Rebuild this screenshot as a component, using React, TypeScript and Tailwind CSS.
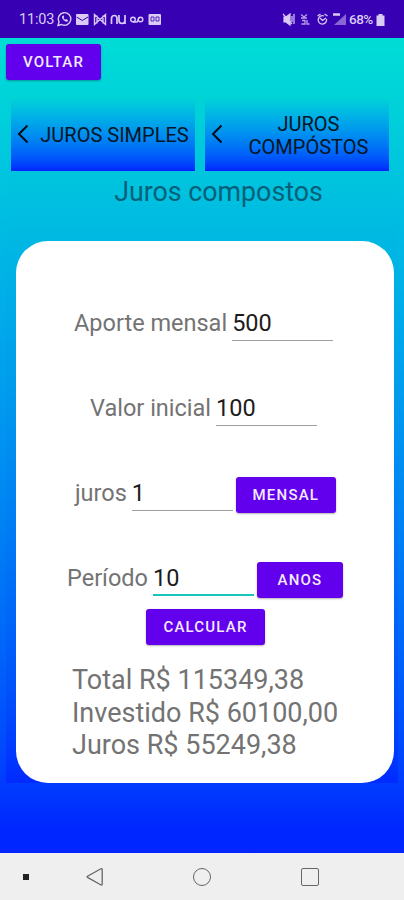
import type { ReactNode } from "react";

const BUTTON =
  "flex items-center justify-center rounded-[3px] bg-[#6200ee] text-[15px] font-medium tracking-[1.2px] text-[#f3eaff] shadow-[0_1px_2px_rgba(0,0,0,0.3)]";

const RESULTS = ["Total R$ 115349,38", "Investido R$ 60100,00", "Juros R$ 55249,38"];

function StatusBar() {
  return (
    <header className="flex h-[38px] items-center justify-between bg-[#3700b3] pl-[19px] pr-[19px] text-[#d9cbf5]">
      <div className="flex items-center">
        <span className="w-[35px] whitespace-nowrap pt-[2px] text-[14.5px] tracking-[-0.2px]">11:03</span>
        <svg className="ml-[2px]" width="110" height="18" viewBox="0 0 110 18" fill="none" stroke="currentColor" strokeWidth="1.4">
          <path d="M2 15.5l1-3.6a6.3 6.3 0 1 1 2.600 2.600z" />
          <path d="M6 6.500c-.5 2.500 3.500 6 5.500 5l.5-1.500-2-1-1 .8-1.500-1.500.8-1-.8-2z" fill="currentColor" stroke="none" />
          <rect x="20" y="4" width="12.500" height="11" rx="1" fill="currentColor" stroke="none" />
          <path d="M20.500 7l5.800 3.500L32 7" stroke="#3700b3" strokeWidth="1" />
          <path d="M38.500 14.500V4.500l5.500 5 5.500-5v10l-5.500-5zM41 5.500v8M47 5.500v8" strokeWidth="1.400" />
          <path d="M55.500 14V8.500q0-3 3-3 2.500 0 2.500 3V14M63 5v5.500q0 3 3 3t3-3V5M69 5v9" strokeWidth="1.700" />
          <circle cx="77" cy="9.500" r="2.300" />
          <circle cx="84.500" cy="9.500" r="2.300" />
          <path d="M77 12h4l2-4" strokeWidth="1.300" />
          <rect x="92.500" y="4" width="12.500" height="11" rx="1" fill="currentColor" stroke="none" />
          <path d="M95 7h3v4h-3zM100 7h3v4h-3z" stroke="#3700b3" strokeWidth="0.800" />
        </svg>
      </div>
      <div className="flex items-center">
        <svg width="66" height="18" viewBox="0 0 66 18" fill="none" stroke="currentColor" strokeWidth="1.200">
          <path d="M2 7h2l4-3v11l-4-3H2z" fill="currentColor" />
          <path d="M1 4l9 10M10 6v6M12 4v10" />
          <path d="M19 4.500l3 2.500 3-2.500M19 8h6M20 10.500h3v3.500h-3.500M25 10v4h2.500" strokeWidth="1.300" opacity=".8" />
          <path d="M42 6a4.200 4.200 0 1 0 2.500 3M35.500 6l3-2M42.500 4l3 2M38 8l2.500 2.500L44 8" strokeWidth="1.300" />
          <path d="M52 15L64 4v11z" fill="currentColor" stroke="none" opacity=".5" />
          <path d="M51 4.500h7" strokeWidth="2.500" />
        </svg>
        <span className="ml-px w-[26px] whitespace-nowrap pt-px text-[13.500px] font-medium tracking-[-0.5px]">68%</span>
        <svg className="ml-[1px] mt-[2px]" width="9" height="14" viewBox="0 0 9 14" fill="currentColor">
          <path d="M2.500 1h4v1.500H8.500V13H.5V2.500h2z" />
        </svg>
      </div>
    </header>
  );
}

function Tab({ children }: { children: ReactNode }) {
  return (
    <div className="flex h-[74px] w-[184px] items-center bg-linear-to-b from-[#00d5d6] to-[#0022ff] pl-[6px] text-[20px] leading-[23px] text-[#041626]">
      <svg className="shrink-0" width="12" height="20" viewBox="0 0 12 20" fill="none" stroke="#050a14" strokeWidth="2">
        <path d="M10.500 1.500L2 10l8.500 8.500" />
      </svg>
      <span className="flex-1 pl-[5px] pt-[3px] text-center whitespace-nowrap">{children}</span>
    </div>
  );
}

function Field({ label, value, active = false }: { label: string; value: string; active?: boolean }) {
  return (
    <>
      <label className="whitespace-nowrap text-[23.500px] leading-[36px] text-[#737373]">{label}</label>
      <div
        className={`ml-[5px] h-[36px] w-[101px] text-[23.500px] leading-[36px] text-[#1c1c1c] ${
          active ? "border-b-2 border-[#18c5b9]" : "border-b border-[#a0a0a0]"
        }`}
      >
        {value}
      </div>
    </>
  );
}

function NavigationBar() {
  return (
    <nav className="flex h-[47px] items-center bg-[#efefef]">
      <span className="ml-[23px] size-[6px] bg-[#222]" />
      <svg className="ml-[57px]" width="18" height="20" viewBox="0 0 18 20" fill="none" stroke="#666" strokeWidth="1.300">
        <path d="M15 1.800L1.500 9.200q-.8.600 0 1.200L15 18q1.200.4 1.200-.8V2.600q0-1.200-1.200-.8z" />
      </svg>
      <span className="ml-[89px] size-[18px] rounded-full border-[1.500px] border-[#666]" />
      <span className="ml-[90px] size-[18px] rounded-[2px] border-[1.500px] border-[#666]" />
    </nav>
  );
}

export default function App() {
  return (
    <div className="flex h-[900px] w-[404px] flex-col overflow-hidden font-['Roboto',sans-serif]">
      <StatusBar />
      <main className="flex h-[815px] flex-col bg-linear-to-b from-[#00ddd5] to-[#0026ff] to-97% px-[6px] pt-[6px]">
        <button className={`${BUTTON} h-[36px] w-[95px]`}>VOLTAR</button>
        <section className="mt-[11px] flex h-[692px] w-[392px] flex-col bg-linear-to-b from-[#00d4d6] to-[#002aff] px-[5px] pt-[6px]">
          <div className="flex gap-[10px]">
            <Tab>JUROS SIMPLES</Tab>
            <Tab>
              JUROS
              <br />
              COMPÓSTOS
            </Tab>
          </div>
          <h1 className="mt-[4px] pl-[33px] text-center text-[26.800px] leading-[34px] text-[#046078]">Juros compostos</h1>
          <div className="ml-[5px] mt-[32px] flex h-[542px] w-[378px] flex-col rounded-[32px] bg-white pt-[64px]">
            <div className="flex h-[85px] pl-[58px]">
              <Field label="Aporte mensal" value="500" />
            </div>
            <div className="flex h-[85px] pl-[74px]">
              <Field label="Valor inicial" value="100" />
            </div>
            <div className="flex h-[85px] pl-[59px]">
              <Field label="juros" value="1" />
              <button className={`${BUTTON} ml-[3px] mt-[2px] h-[36px] w-[100px]`}>MENSAL</button>
            </div>
            <div className="flex h-[49px] pl-[51px]">
              <Field label="Período" value="10" active />
              <button className={`${BUTTON} ml-[3px] mt-[2px] h-[36px] w-[86px]`}>ANOS</button>
            </div>
            <button className={`${BUTTON} ml-[130px] h-[36px] w-[119px]`}>CALCULAR</button>
            <div className="ml-[56px] mt-[19px] text-[27px] leading-[32.500px] text-[#737373]">
              {RESULTS.map((line) => (
                <p key={line} className="whitespace-nowrap">{line}</p>
              ))}
            </div>
          </div>
        </section>
      </main>
      <NavigationBar />
    </div>
  );
}
